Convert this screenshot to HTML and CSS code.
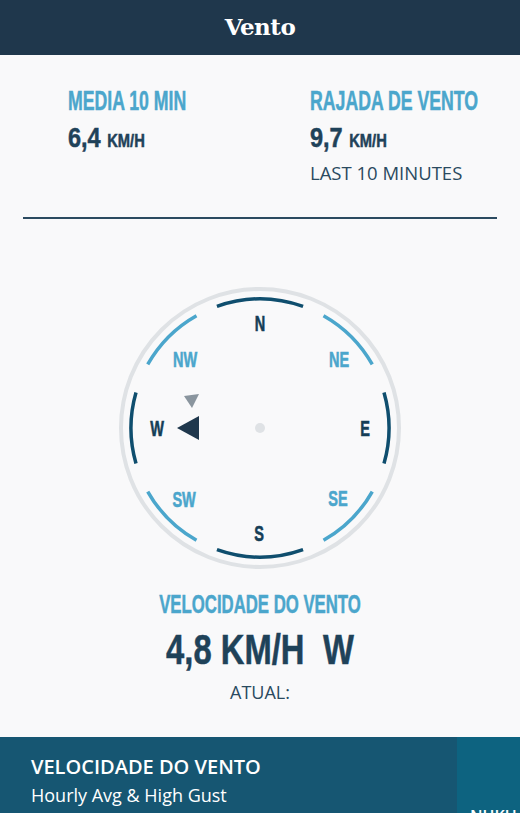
FILE: index.html
```html
<!DOCTYPE html>
<html lang="pt">
<head>
    <meta charset="UTF-8">
    <meta name="viewport" content="width=device-width, initial-scale=1.0">
    <title>Vento</title>
    <link rel="stylesheet" href="styles.css">
</head>
<body>
    <header class="topbar">
        <h1>Vento</h1>
    </header>
    <main class="container">
        <section class="stats">
            <div class="stat">
                <h2 class="stat-label">MEDIA 10 MIN</h2>
                <p class="stat-value">6,4 <span class="unit">KM/H</span></p>
            </div>
            <div class="stat">
                <h2 class="stat-label">RAJADA DE VENTO</h2>
                <p class="stat-value">9,7 <span class="unit">KM/H</span></p>
                <p class="stat-note">LAST 10 MINUTES</p>
            </div>
        </section>

        <div class="compass">
            <svg width="300" height="300" viewBox="0 0 300 300">
                <circle class="ring" cx="150" cy="150" r="139"/>
                <!-- cardinal arcs -->
                <path class="arc main" d="M106.94 28.4 A129 129 0 0 1 193.06 28.4"/>
                <path class="arc main" d="M274 114.45 A129 129 0 0 1 274 185.55"/>
                <path class="arc main" d="M193.06 271.6 A129 129 0 0 1 106.94 271.6"/>
                <path class="arc main" d="M26 185.55 A129 129 0 0 1 26 114.45"/>
                <!-- intercardinal arcs -->
                <path class="arc sub" d="M213.52 37.72 A129 129 0 0 1 262.28 86.48"/>
                <path class="arc sub" d="M262.28 213.52 A129 129 0 0 1 213.52 262.28"/>
                <path class="arc sub" d="M86.48 262.28 A129 129 0 0 1 37.72 213.52"/>
                <path class="arc sub" d="M37.72 86.48 A129 129 0 0 1 86.48 37.72"/>

                <text class="dir main" x="150" y="53">N</text>
                <text class="dir main" x="255" y="158">E</text>
                <text class="dir main" x="149" y="263">S</text>
                <text class="dir main" x="47" y="158">W</text>
                <text class="dir sub" x="229" y="89">NE</text>
                <text class="dir sub" x="228" y="228">SE</text>
                <text class="dir sub" x="74" y="229">SW</text>
                <text class="dir sub" x="75" y="89">NW</text>

                <circle class="hub" cx="150" cy="150" r="5"/>
                <polygon class="gust-mark" points="74,118 89,116 82,130"/>
                <polygon class="wind-mark" points="67,150 89,138 89,162"/>
            </svg>
        </div>

        <section class="current">
            <h2 class="current-label">VELOCIDADE DO VENTO</h2>
            <p class="current-value">4,8 KM/H <span class="current-dir">W</span></p>
            <p class="current-note">ATUAL:</p>
        </section>
    </main>

    <footer class="panel">
        <div class="panel-text">
            <h3>VELOCIDADE DO VENTO</h3>
            <p>Hourly Avg &amp; High Gust</p>
        </div>
        <div class="panel-side">NUKU</div>
    </footer>
</body>
</html>
```

FILE: styles.css
```css
body {
    margin: 0;
    padding: 0;
    background: #f9f9fa;
    font-family: 'Open Sans', Arial, sans-serif;
    color: #2a4a5f;
    overflow: hidden;
}
.topbar {
    background: #1f374c;
    height: 55px;
    display: flex;
    align-items: center;
    justify-content: center;
}
.topbar h1 {
    margin: 0 0 2px 0;
    font-family: 'DejaVu Serif', 'Liberation Serif', serif;
    font-weight: bold;
    font-size: 23px;
    letter-spacing: -0.5px;
    color: #fff;
}
.container {
    padding: 0 23px;
    overflow: hidden;
}
.stats {
    display: grid;
    grid-template-columns: 242px 1fr;
    padding: 32px 0 32px 45px;
    border-bottom: 2px solid #2b4a60;
}

/* condensed headline type: no narrow face installed, so squeeze Arial-metric bold */
.stat-label,
.stat-value,
.current-label,
.current-value {
    font-family: 'Liberation Sans', Arial, sans-serif;
    font-weight: bold;
    margin: 0;
    white-space: nowrap;
    -webkit-text-stroke: 0.5px currentColor;
}
.stat-label {
    font-size: 27px;
    line-height: 28px;
    color: #4ba6cc;
    transform: scaleX(0.655);
    transform-origin: left center;
}
.stat-value {
    margin-top: 8px;
    font-size: 28px;
    line-height: 30px;
    color: #1f4259;
    transform: scaleX(0.84);
    transform-origin: left center;
}
.unit {
    font-size: 17.5px;
}
.stat-note {
    margin: 5px 0 0 0;
    font-size: 18.5px;
    line-height: 24px;
}
.compass {
    display: flex;
    justify-content: center;
    margin-top: 59px;
}
.compass svg {
    display: block;
}
.ring {
    fill: none;
    stroke: #dfe2e5;
    stroke-width: 4;
}
.arc {
    fill: none;
    stroke-width: 3.5;
}
.arc.main {
    stroke: #0f4e6e;
}
.arc.sub {
    stroke: #4ba6cc;
}
.dir {
    font-family: 'Liberation Sans', Arial, sans-serif;
    font-weight: bold;
    font-size: 22px;
    text-anchor: middle;
    stroke-width: 0.6;
    transform-box: fill-box;
    transform-origin: center;
    transform: scaleX(0.66);
}
.dir.main {
    fill: #153e57;
    stroke: #153e57;
}
.dir.sub {
    fill: #4ba6cc;
    stroke: #4ba6cc;
}
.hub {
    fill: #dfe2e5;
}
.gust-mark {
    fill: #8a959e;
}
.wind-mark {
    fill: #1f374c;
}
.current {
    text-align: center;
    margin-top: 13px;
}
.current-label {
    font-size: 25px;
    line-height: 26px;
    color: #4ba6cc;
    transform: scaleX(0.67);
}
.current-value {
    margin-top: 11px;
    font-size: 42px;
    line-height: 44px;
    color: #1f4259;
    transform: scaleX(0.78);
}
.current-dir {
    margin-left: 12px;
}
.current-note {
    margin: 8px 0 0 0;
    font-size: 18px;
    line-height: 24px;
}
.panel {
    margin-top: 33px;
    display: flex;
    height: 90px;
    background: #165672;
    color: #fff;
}
.panel-text {
    flex: 1;
    padding: 17px 0 0 31px;
}
.panel-text h3 {
    margin: 0;
    font-size: 20px;
    line-height: 26px;
    font-weight: 600;
}
.panel-text p {
    margin: 3px 0 0 0;
    font-size: 18px;
    line-height: 24px;
}
.panel-side {
    width: 63px;
    background: #0d6380;
    box-sizing: border-box;
    padding: 68px 0 0 13px;
    font-size: 16px;
    font-weight: 600;
}
```
